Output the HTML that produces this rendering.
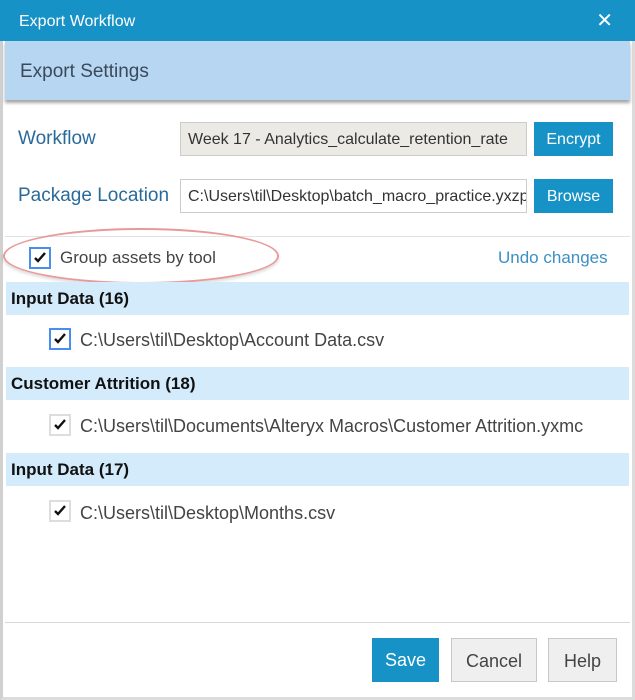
<!DOCTYPE html>
<html><head><style>
*{margin:0;padding:0;box-sizing:border-box}
body{width:635px;height:700px;background:#fff;font-family:"Liberation Sans",sans-serif;position:relative;overflow:hidden}
.frame{position:absolute;left:0;top:0;width:635px;height:700px;border:1px solid #c9c9c9;border-left:3px solid #d0d0d0;border-right:3px solid #dcdcdc;border-bottom:3px solid #dcdcdc}
.title{position:absolute;left:0;top:0;width:635px;height:41px;background:#1692c6;color:#fff;font-size:16px;line-height:43px;padding-left:19px}
.x{position:absolute;right:22px;top:0;font-size:20px}
.band{position:absolute;left:5px;top:41px;width:625px;height:59px;background:#b7d6f2;box-shadow:0 3px 3px rgba(0,0,0,.35);font-size:19px;color:#3a4a5a;line-height:62px;padding-left:15px}
.lbl{position:absolute;left:18px;font-size:19px;color:#2a6a9a}
.inp{position:absolute;left:180px;width:347px;height:34px;border:1px solid #ccc;font-size:16px;line-height:34px;padding-left:7px;color:#333;overflow:hidden;white-space:nowrap}
.btn{position:absolute;background:#1692c6;color:#fff;font-size:16px;text-align:center;line-height:36px;height:34px}
.sep{position:absolute;left:5px;width:625px;height:1px;background:#e2e2e2}
.cb{position:absolute;width:22px;height:22px;border:2px solid #ddd;background:#fff}
.cb.f{border-color:#4a8df0}
.cb svg{position:absolute;left:2px;top:2px}
.hdr{position:absolute;left:6px;width:623px;height:33px;background:#d4ebfb;font-weight:bold;font-size:17px;line-height:34px;padding-left:5px;color:#111}
.item{position:absolute;left:80px;font-size:18px;color:#444}
.fb{position:absolute;top:638px;height:44px;font-size:18px;line-height:44px;text-align:center}
</style></head><body>
<div class="frame"></div>
<div class="title">Export Workflow<span class="x">✕</span></div>
<div class="band">Export Settings</div>
<div class="lbl" style="top:128px">Workflow</div>
<div class="inp" style="top:122px;background:#eceae5">Week 17 - Analytics_calculate_retention_rate</div>
<div class="btn" style="left:534px;top:122px;width:79px">Encrypt</div>
<div class="lbl" style="top:185px">Package Location</div>
<div class="inp" style="top:179px">C:\Users\til\Desktop\batch_macro_practice.yxzp</div>
<div class="btn" style="left:534px;top:179px;width:79px">Browse</div>
<div class="sep" style="top:236px"></div>
<div style="position:absolute;left:3px;top:228px;width:276px;height:56px;border:2.5px solid #e89a9a;border-radius:50%;box-shadow:0 2px 3px rgba(0,0,0,.15)"></div>
<div class="cb f" style="left:29px;top:247px"><svg width="14" height="14" viewBox="0 0 14 14"><path d="M2 7l3 3 7-8" stroke="#111" stroke-width="2.4" fill="none"/></svg></div>
<div style="position:absolute;left:60px;top:248px;font-size:17px;color:#444">Group assets by tool</div>
<div style="position:absolute;left:498px;top:248px;font-size:17px;color:#3d8fc4">Undo changes</div>
<div class="hdr" style="top:282px">Input Data (16)</div>
<div class="cb f" style="left:49px;top:328px"><svg width="14" height="14" viewBox="0 0 14 14"><path d="M2 7l3 3 7-8" stroke="#111" stroke-width="2.4" fill="none"/></svg></div>
<div class="item" style="top:330px">C:\Users\til\Desktop\Account Data.csv</div>
<div class="hdr" style="top:367px">Customer Attrition (18)</div>
<div class="cb" style="left:49px;top:414px"><svg width="14" height="14" viewBox="0 0 14 14"><path d="M2 7l3 3 7-8" stroke="#111" stroke-width="2.4" fill="none"/></svg></div>
<div class="item" style="top:416px">C:\Users\til\Documents\Alteryx Macros\Customer Attrition.yxmc</div>
<div class="hdr" style="top:453px">Input Data (17)</div>
<div class="cb" style="left:49px;top:500px"><svg width="14" height="14" viewBox="0 0 14 14"><path d="M2 7l3 3 7-8" stroke="#111" stroke-width="2.4" fill="none"/></svg></div>
<div class="item" style="top:503px">C:\Users\til\Desktop\Months.csv</div>
<div class="sep" style="top:622px;background:#d8d8d8"></div>
<div class="fb" style="left:372px;width:67px;background:#1692c6;color:#fff">Save</div>
<div class="fb" style="left:451px;width:86px;background:#efefef;border:1px solid #c8c8c8;color:#444">Cancel</div>
<div class="fb" style="left:548px;width:69px;background:#efefef;border:1px solid #c8c8c8;color:#444">Help</div>
</body></html>
